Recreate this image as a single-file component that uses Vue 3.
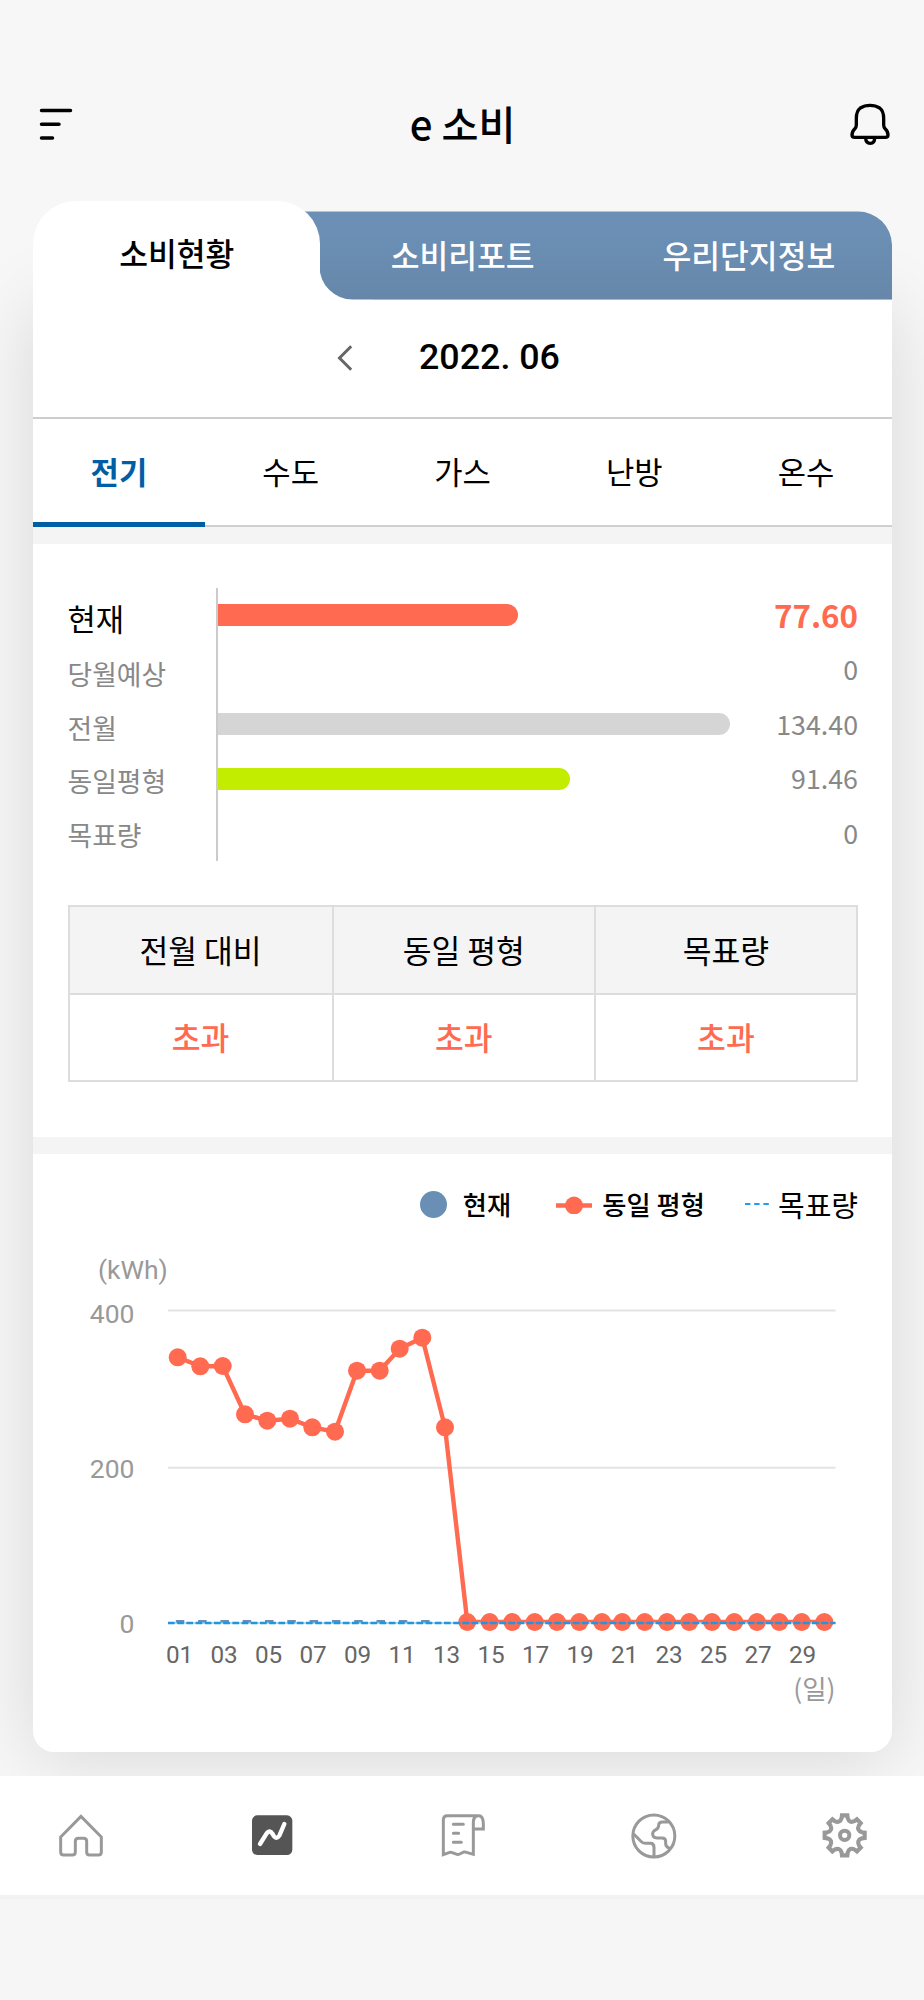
<script setup>
const subTabs = ['전기', '수도', '가스', '난방', '온수']

const usage = [
  { label: '현재', value: '77.60', width: 300.5, color: '#ff6a50' },
  { label: '당월예상', value: '0', width: 0, color: '#ff6a50' },
  { label: '전월', value: '134.40', width: 512.5, color: '#d5d5d5' },
  { label: '동일평형', value: '91.46', width: 352, color: '#c2ec00' },
  { label: '목표량', value: '0', width: 0, color: '#c2ec00' },
]

const compare = ['전월 대비', '동일 평형', '목표량']

// Chart space: origin at the card's left edge, just under the legend
const xs = [
  144.2, 166.8, 189.2, 211.5, 233.8, 256.5, 278.8, 301.5, 323.5, 346.2,
  366.2, 388.8, 411.5, 433.8, 456.2, 478.8, 501.2, 523.5, 545.8, 568.5,
  588.8, 611.2, 633.5, 655.8, 678.5, 700.8, 723.5, 745.8, 768.2, 790.8,
].map((x) => x + 0.5)
const ys = [
  117.3, 126.3, 126, 174.3, 180.7, 178.7, 187.3, 191.7, 130.7, 130.7,
  108.7, 97.7, 187.3,
]
const points = xs.map((x, i) => ({ x, y: i < ys.length ? ys[i] : 382 }))
const falling = points.slice(0, 14).map((p) => `${p.x},${p.y}`).join(' ')
const days = Array.from({ length: 15 }, (_, i) => ({
  text: String(i * 2 + 1).padStart(2, '0'),
  x: 146.6 + i * 44.5,
}))

function turn(x, y, a) {
  const c = Math.cos(a)
  const s = Math.sin(a)
  return `${(x * c - y * s).toFixed(2)} ${(x * s + y * c).toFixed(2)}`
}
let gear = ''
for (let i = 0; i < 8; i++) {
  const a = (i * Math.PI) / 4
  gear += `${i ? 'L' : 'M'}${turn(-9, -52, a)}L${turn(-8, -60, a)}L${turn(8, -60, a)}L${turn(9, -52, a)}`
  gear += `Q${turn(14, -35, a)} ${turn(-9, -52, a + Math.PI / 4)}`
}
gear += 'Z'
</script>

<template>
  <div class="screen">
    <header class="top">
      <svg class="menu" viewBox="0 0 36 36" width="36" height="36">
        <path d="M3.5 4.5H32.5M3.5 18.3H21M3.5 32H14.5" stroke="#000" stroke-width="3.5" stroke-linecap="round" />
      </svg>
      <h1>e 소비</h1>
      <svg class="bell" viewBox="1161 63 126 132" width="42" height="44">
        <g fill="none" stroke="#000" stroke-width="10" stroke-linecap="round" stroke-linejoin="round">
          <path d="M1183 112Q1183 90 1195 81Q1207 73 1224 73Q1241 73 1253 81Q1265 90 1265 112V132Q1265 139 1270 144Q1278 151 1278 162Q1278 169 1270 169H1178Q1170 169 1170 162Q1170 151 1178 144Q1183 139 1183 132Z" />
          <path d="M1211 171Q1211 187 1225 187Q1238 187 1238 171" />
        </g>
      </svg>
    </header>

    <main class="card">
      <nav class="tabs">
        <div class="tab active">소비현황</div>
        <div class="rest">
          <div class="tab">소비리포트</div>
          <div class="tab">우리단지정보</div>
        </div>
      </nav>

      <div class="body">
        <div class="month">
          <svg viewBox="0 0 18 30" width="18" height="30">
            <path d="M15.2 3.2L3.5 15L15.2 26.8" fill="none" stroke="#666" stroke-width="3" />
          </svg>
          <span>2022. 06</span>
        </div>

        <div class="subtabs">
          <div v-for="(t, i) in subTabs" :key="t" class="subtab" :class="{ on: i === 0 }">{{ t }}</div>
        </div>
        <div class="band"></div>

        <section class="usage">
          <div class="names">
            <div v-for="(u, i) in usage" :key="u.label" :class="{ now: i === 0 }">{{ u.label }}</div>
          </div>
          <div class="bars">
            <div v-for="u in usage" :key="u.label" class="slot">
              <div class="bar" :style="{ width: u.width + 'px', background: u.color }"></div>
            </div>
          </div>
          <div class="values">
            <div v-for="(u, i) in usage" :key="u.label" :class="{ now: i === 0 }">{{ u.value }}</div>
          </div>
        </section>

        <section class="compare">
          <div v-for="c in compare" :key="c" class="col">
            <div class="head">{{ c }}</div>
            <div class="result">초과</div>
          </div>
        </section>
        <div class="band"></div>

        <section class="legend">
          <div class="item">
            <i class="dot"></i><span class="strong first">현재</span>
          </div>
          <div class="item second">
            <svg width="36" height="20" viewBox="0 0 36 20">
              <path d="M0 11.5H36" stroke="#ff6a50" stroke-width="4.6" />
              <circle cx="18" cy="11.5" r="9" fill="#ff6a50" />
            </svg>
            <span class="strong">동일 평형</span>
          </div>
          <div class="item third">
            <svg width="24" height="4" viewBox="0 0 24 4">
              <path d="M0 2H24" stroke="#1e9ff2" stroke-width="2" stroke-dasharray="5.4 3.8" />
            </svg>
            <span>목표량</span>
          </div>
        </section>

        <svg class="chart" width="859" height="511" viewBox="0 0 859 511">
          <g class="axis">
            <text x="65" y="39">(kWh)</text>
            <text x="101.5" y="82.5" text-anchor="end">400</text>
            <text x="101.5" y="237.5" text-anchor="end">200</text>
            <text x="101.5" y="393" text-anchor="end">0</text>
          </g>
          <path d="M135 70.4H802.5M135 227.7H802.5" stroke="#e4e4e4" stroke-width="2" />
          <polyline :points="falling" fill="none" stroke="#ff6a50" stroke-width="4.4" />
          <path d="M433.8 381H790.8" stroke="#ff6a50" stroke-width="2.4" />
          <rect v-for="n in 12" :key="n" :x="120.5 + n * 22.3" y="380" width="8.5" height="2.5" fill="#6a8fb5" />
          <circle v-for="p in points" :key="p.x" :cx="p.x" :cy="p.y" r="9" fill="#ff6a50" />
          <path d="M135 383H802.5" stroke="#1e9fe8" stroke-opacity=".35" stroke-width="2" />
          <path d="M135 383H802.5" stroke="#2295e0" stroke-width="2.4" stroke-dasharray="6.7 2.5" />
          <g class="days">
            <text v-for="d in days" :key="d.text" :x="d.x" y="423.3" text-anchor="middle">{{ d.text }}</text>
          </g>
          <text class="unit" x="802.5" y="458.5" text-anchor="end">(일)</text>
        </svg>
      </div>
    </main>

    <nav class="bottom">
      <svg viewBox="171 243 144 144" width="48" height="48">
        <path d="M243 259L182 321V366Q182 375 191 375H217Q226 375 226 366V334Q226 325 235 325H251Q260 325 260 334V366Q260 375 269 375H295Q304 375 304 366V321Z" fill="none" stroke="#999" stroke-width="9" />
      </svg>
      <svg viewBox="743 243 144 144" width="48" height="48">
        <rect x="755" y="256" width="121" height="119" rx="16" fill="#555" />
        <path d="M779 342L799 310Q808 298 817 312Q827 332 837 317L852 282" fill="none" stroke="#fff" stroke-width="13" stroke-linecap="round" stroke-linejoin="round" />
      </svg>
      <svg viewBox="1317 243 144 144" width="48" height="48">
        <g fill="none" stroke="#999" stroke-width="9">
          <path d="M1436 257H1342Q1330 257 1330 270V374L1349 367Q1353 366 1357 368L1371 373Q1375 374 1379 372L1392 366Q1396 365 1400 367L1420 373V277Q1420 257 1436 257Q1450 257 1450 282V297H1420" />
          <path d="M1360 283H1390M1360 310H1376M1360 337H1384" stroke-linecap="round" />
        </g>
      </svg>
      <svg viewBox="505 153 144 144" width="48" height="48">
        <g fill="none" stroke="#999" stroke-width="9">
          <circle cx="576.5" cy="228" r="63" />
          <path d="M620 186H602Q591 186 591 196Q591 205 583 209Q573 214 573 221Q573 233 586 234H601Q612 234 612 244V251Q612 260 624 265" />
          <path d="M516 222L540 246Q544 250 552 250H566Q577 250 577 262V290" />
        </g>
      </svg>
      <svg viewBox="1077 153 144 144" width="48" height="48">
        <g transform="translate(1148 226)" fill="none" stroke="#999">
          <path :d="gear" stroke-width="12.5" />
          <circle r="14" stroke-width="12" />
        </g>
      </svg>
    </nav>
  </div>
</template>

<style>
body {
  background: #f6f6f6;
}
</style>

<style scoped>
.screen {
  width: 924px;
  height: 2000px;
  background: #f7f7f7;
  overflow: hidden;
  font-family: "Noto Sans CJK KR", "Noto Sans", sans-serif;
  color: #000;
  display: flex;
  flex-direction: column;
}
.top {
  box-sizing: border-box;
  height: 201px;
  padding: 46px 33.5px 0 37.5px;
  display: grid;
  grid-template-columns: 42px 1fr 42px;
  align-items: center;
}
.top h1 {
  margin: 0;
  padding: 0 3px 1px 0;
  text-align: center;
  font-size: 40.2px;
  line-height: 60px;
  font-weight: 500;
}
.bell {
  justify-self: end;
}
.card {
  width: 859px;
  margin-left: 33px;
}
.tabs {
  height: 98.5px;
  display: flex;
  align-items: flex-end;
  position: relative;
  z-index: 1;
  border-radius: 43px 34px 0 0;
  background: linear-gradient(#fff, #fff) 0 100% / 340px 34px no-repeat;
}
.tab {
  display: flex;
  align-items: center;
  justify-content: center;
  font-size: 31.3px;
  font-weight: 500;
}
.tab.active {
  flex: 0 0 286.5px;
  height: 98.5px;
  box-sizing: border-box;
  padding: 4px 0 0 1px;
  background: #fff;
  border-radius: 43px 43px 0 0;
  position: relative;
  z-index: 2;
}
.rest {
  box-sizing: border-box;
  flex: 1;
  height: 88.5px;
  margin-left: -40px;
  padding: 0 0 1px 40px;
  color: #fff;
  display: grid;
  grid-template-columns: 1fr 1fr;
  background: linear-gradient(#6b8fb5 25%, #6687a9);
  clip-path: path("M0 0.5H578A34 34 0 0 1 612.5 34V88.5H73A33 33 0 0 1 40 55.5V40H0Z");
}
.body {
  height: 1452px;
  background: #fff;
  border-radius: 0 0 21px 21px;
  box-shadow: 0 6px 76px rgba(0, 0, 0, 0.13);
}
.month {
  height: 117px;
  padding-left: 303px;
  display: flex;
  align-items: center;
  gap: 65px;
  font: 500 35.8px/1 Roboto, sans-serif;
  border-bottom: 2px solid #cdcdcd;
}
.month span {
  padding-bottom: 1px;
}
.subtabs {
  height: 108px;
  display: grid;
  grid-template-columns: repeat(5, 1fr);
  box-shadow: inset 0 -2px #cfcfcf;
}
.subtab {
  display: flex;
  align-items: center;
  justify-content: center;
  box-sizing: border-box;
  font-size: 30.8px;
  padding-top: 1px;
  border-bottom: 5px solid transparent;
}
.subtab.on {
  color: #005ea6;
  font-weight: 700;
  border-color: #005ea6;
}
.band {
  height: 17px;
  background: #f4f4f4;
}
.usage {
  height: 361.5px;
  box-sizing: border-box;
  padding: 44px 34px 0 34.5px;
  display: flex;
  color: #888;
  font-size: 26.8px;
}
.names {
  width: 148px;
  padding-top: 6px;
}
.names div {
  height: 53.5px;
  line-height: 53.5px;
}
.names .now {
  color: #000;
  font-size: 30.8px;
  line-height: 48px;
}
.bars {
  flex: 1;
  height: 273px;
  border-left: 2px solid #cbcbcb;
}
.slot {
  height: 54.7px;
  display: flex;
  align-items: center;
}
.bar {
  height: 22px;
  border-radius: 0 11px 11px 0;
}
.values {
  text-align: right;
}
.values div {
  height: 54.5px;
  line-height: 54.5px;
}
.values .now {
  color: #ff6a50;
  font-weight: 700;
  font-size: 31.3px;
}
.compare {
  margin: 0 34px 55px 34.5px;
  height: 177px;
  box-sizing: border-box;
  border: 2px solid #ddd;
  display: grid;
  grid-template-columns: repeat(3, 1fr);
  font-size: 31.3px;
  text-align: center;
}
.col + .col {
  border-left: 2px solid #ddd;
}
.head {
  height: 86px;
  line-height: 85px;
  background: #f4f4f4;
  border-bottom: 2px solid #ddd;
}
.result {
  line-height: 84px;
  font-weight: 500;
  color: #ff6a50;
}
.legend {
  height: 86px;
  box-sizing: border-box;
  padding: 8px 34px 0 0;
  display: flex;
  justify-content: flex-end;
  align-items: flex-start;
}
.item {
  height: 84px;
  display: flex;
  align-items: center;
  font-size: 29px;
}
.item .strong {
  font-size: 26.3px;
  font-weight: 500;
  padding-left: 10px;
}
.item .first {
  padding-left: 16px;
}
.dot {
  width: 27px;
  height: 27px;
  border-radius: 50%;
  background: #6a8fb5;
}
.second {
  margin-left: 45px;
}
.third {
  margin-left: 40.5px;
}
.third span {
  padding-left: 8.5px;
}
.item span {
  padding-bottom: 1px;
}
.chart {
  display: block;
}
.axis text {
  font: 26.5px Roboto, sans-serif;
  fill: #999;
}
.days text {
  font: 24.3px Roboto, sans-serif;
  fill: #666;
}
.unit {
  font-size: 26.5px;
  fill: #999;
}
.bottom {
  position: relative;
  z-index: 2;
  box-sizing: border-box;
  margin-top: 24px;
  height: 123px;
  padding: 0 55px 0 57px;
  background: #fff;
  border-bottom: 4px solid #f2f2f2;
  display: flex;
  align-items: center;
  justify-content: space-between;
  box-shadow: 0 102px 0 102px #f6f6f6;
  clip-path: inset(0 0 -110px 0);
}
</style>
